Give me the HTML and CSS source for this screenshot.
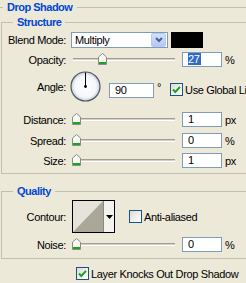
FILE: index.html
```html
<!DOCTYPE html>
<html lang="en">
<head>
<meta charset="UTF-8" />
<meta name="viewport" content="width=device-width, initial-scale=1" />
<title>Drop Shadow</title>
<link rel="stylesheet" href="styles.css">
</head>
<body>

<div class="panel">
  <div class="title"><span class="title-text">Drop Shadow</span></div>

  <!-- Structure -->
  <fieldset class="group group-structure">
    <legend>Structure</legend>

    <div class="row row-blend">
      <span class="lbl">Blend Mode:</span>
      <div class="select">
        <span class="select-text">Multiply</span>
        <span class="select-btn">
          <svg width="8" height="6" viewBox="0 0 8 6"><path d="M1 1 L4 4 L7 1" fill="none" stroke="#4d6185" stroke-width="2"/></svg>
        </span>
      </div>
      <div class="swatch"></div>
    </div>

    <div class="row row-val">
      <span class="lbl">Opacity:</span>
      <div class="slider"><div class="track"></div><div class="rail"><span class="thumb" style="left: 27%"></span></div></div>
      <div class="num"><span class="sel">27</span></div>
      <span class="unit">%</span>
    </div>

    <div class="row row-angle">
      <span class="lbl lbl-angle">Angle:</span>
      <svg class="dial" width="31" height="31" viewBox="0 0 31 31">
        <defs>
          <radialGradient id="dialFill" cx="50%" cy="50%" r="50%">
            <stop offset="0%" stop-color="#ffffff"/>
            <stop offset="75%" stop-color="#f4f6fa"/>
            <stop offset="100%" stop-color="#c3cad8"/>
          </radialGradient>
        </defs>
        <circle cx="15.5" cy="15.5" r="14.5" fill="url(#dialFill)" stroke="#4f5668" stroke-width="1.2"/>
        <line x1="15.5" y1="15.5" x2="15.5" y2="1.5" stroke="#000" stroke-width="1"/>
        <circle cx="15.5" cy="15.5" r="1.4" fill="#000"/>
      </svg>
      <div class="num num-angle">90</div>
      <span class="deg">°</span>
      <span class="check checked"></span>
      <span class="check-text">Use Global Light</span>
    </div>

    <div class="row row-val row-distance">
      <span class="lbl">Distance:</span>
      <div class="slider"><div class="track"></div><div class="rail"><span class="thumb" style="left: 0%"></span></div></div>
      <div class="num">1</div>
      <span class="unit">px</span>
    </div>

    <div class="row row-val row-spread">
      <span class="lbl">Spread:</span>
      <div class="slider"><div class="track"></div><div class="rail"><span class="thumb" style="left: 0%"></span></div></div>
      <div class="num">0</div>
      <span class="unit">%</span>
    </div>

    <div class="row row-val row-size">
      <span class="lbl">Size:</span>
      <div class="slider"><div class="track"></div><div class="rail"><span class="thumb" style="left: 0%"></span></div></div>
      <div class="num">1</div>
      <span class="unit">px</span>
    </div>
  </fieldset>

  <!-- Quality -->
  <fieldset class="group group-quality">
    <legend>Quality</legend>

    <div class="row row-contour">
      <span class="lbl">Contour:</span>
      <div class="contour">
        <svg class="contour-curve" width="30" height="31" viewBox="0 0 30 31">
          <rect width="30" height="31" fill="#e6e4da"/>
          <path d="M0 31 L30 0 L30 31 Z" fill="#aaa698"/>
        </svg>
        <span class="contour-btn">
          <svg width="7" height="4" viewBox="0 0 7 4"><path d="M0 0 H7 L3.5 4 Z" fill="#000"/></svg>
        </span>
      </div>
      <span class="check check-aa"></span>
      <span class="check-text">Anti-aliased</span>
    </div>

    <div class="row row-val row-noise">
      <span class="lbl">Noise:</span>
      <div class="slider"><div class="track"></div><div class="rail"><span class="thumb" style="left: 0%"></span></div></div>
      <div class="num">0</div>
      <span class="unit">%</span>
    </div>
  </fieldset>

  <div class="row row-knock">
    <span class="check checked"></span>
    <span class="check-text">Layer Knocks Out Drop Shadow</span>
  </div>
</div>

</body>
</html>
```

FILE: styles.css
```css
/* XP style layer panel */
html, body {
  margin: 0; padding: 0;
  height: 100%;
  overflow: hidden;
  background: #ece9d8;
  font-family: 'Liberation Sans', Arial, sans-serif;
  font-size: 11px;
  letter-spacing: -0.35px;
  color: #000;
}

.panel {
  width: 280px;
}

/* group titles */
.title {
  display: flex;
  align-items: center;
  height: 14px;
}
.title::before,
.title::after {
  content: '';
  height: 1px;
  background: #c2bfae;
}
.title::before { width: 3px; }
.title::after { flex: 1; }
.title-text,
legend {
  font-weight: bold;
  color: #0046d5;
  line-height: 14px;
  letter-spacing: -0.5px;
}
.title-text { margin: 0 5px 0 4px; }

fieldset.group {
  margin: 1px 0 0 1px;
  padding: 3px 0 5px 0;
  border: 1px solid #c2bfae;
  min-width: 0;
}
legend {
  margin-left: 11px;
  padding: 0 4px;
}

.group-quality {
  margin-top: 10px !important;
  padding: 2px 0 6px 0 !important;
}

/* rows */
.row {
  display: flex;
  align-items: center;
}
.lbl {
  width: 64px;
  text-align: right;
  flex: none;
}

.row-blend { height: 16px; }
.row-val { height: 15px; margin-top: 4px; }
.row-angle { height: 31px; margin-top: 4px; align-items: flex-start; }
.row-distance { margin-top: 10px; }
.row-spread { margin-top: 6px; }
.row-size { margin-top: 5px; }
.row-contour { height: 33px; }
.row-noise { margin-top: 4px; }
.row-knock { margin: 8px 0 0 76px; height: 13px; }

/* select */
.select {
  margin-left: 5px;
  width: 95px;
  height: 14px;
  border: 1px solid #7f9db9;
  background: #fff;
  display: flex;
  align-items: center;
  justify-content: space-between;
}
.select-text { padding-left: 3px; }
.select-btn {
  width: 13px;
  height: 12px;
  margin-right: 1px;
  border: 1px solid #b7c8f3;
  border-radius: 2px;
  background: linear-gradient(#d4e0fd, #b4c8f6);
  display: flex;
  align-items: center;
  justify-content: center;
}
.swatch {
  margin-left: 3px;
  width: 32px;
  height: 16px;
  background: #000;
}

/* slider */
.slider {
  position: relative;
  margin-left: 6px;
  width: 104px;
  height: 15px;
}
.track {
  margin: 6px 0 0 1px;
  width: 102px;
  height: 1px;
  border-top: 1px solid #a19e92;
  border-bottom: 1px solid #fff;
  background: #d4d1c4;
}
.rail {
  position: absolute;
  top: 1px; left: 0; bottom: 0;
  width: 95px;
}
.thumb {
  position: absolute;
  top: 0;
  width: 9px;
  height: 12px;
  background:
    url("data:image/svg+xml,%3Csvg xmlns='http://www.w3.org/2000/svg' width='9' height='12'%3E%3Cpath d='M0.5 4 L4.5 0.5 L8.5 4 V11.5 H0.5 Z' fill='%23f7f7f3' stroke='%23849088'/%3E%3Crect x='1' y='9' width='7' height='2' fill='%2321a121'/%3E%3C/svg%3E") no-repeat;
}

/* number box */
.num {
  margin-left: 6px;
  width: 33px;
  height: 13px;
  padding-left: 5px;
  border: 1px solid #7f9db9;
  background: #fff;
  line-height: 13px;
}
.sel {
  background: #316ac5;
  color: #fff;
  padding: 0 1px 0 0;
}
.unit { margin-left: 3px; }

/* angle */
.lbl-angle { align-self: center; }
.dial { margin-left: 4px; flex: none; }
.num-angle {
  margin: 12px 0 0 8px;
  width: 38px;
}
.deg { margin: 10px 0 0 3px; }
.row-angle .check { margin: 12px 0 0 9px; }
.row-angle .check-text { margin-top: 13px; white-space: nowrap; }

/* checkbox */
.check {
  flex: none;
  width: 11px;
  height: 11px;
  border: 1px solid #1c5180;
  background: linear-gradient(135deg, #dcdcd6, #fff);
}
.check.checked {
  background:
    url("data:image/svg+xml,%3Csvg xmlns='http://www.w3.org/2000/svg' width='11' height='11'%3E%3Cpath d='M2 5.5 L4.3 8 L9 2.8' fill='none' stroke='%2321a121' stroke-width='2'/%3E%3C/svg%3E") no-repeat,
    linear-gradient(135deg, #dcdcd6, #fff);
}
.check-text { margin-left: 2px; }

/* contour */
.contour {
  margin-left: 6px;
  display: flex;
  height: 31px;
  border: 1px solid #000;
}
.contour-curve { display: block; }
.contour-btn {
  width: 10px;
  border-left: 1px solid #888;
  background: #f3f2ec;
  display: flex;
  align-items: center;
  justify-content: center;
}
.check-aa { margin-left: 14px; }
```
